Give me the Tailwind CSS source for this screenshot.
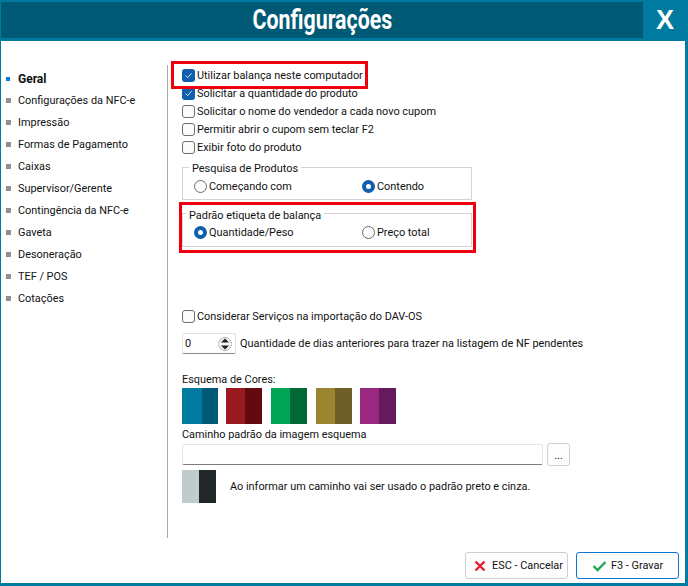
<!DOCTYPE html>
<html lang="pt-BR">
<head>
    <meta charset="UTF-8">
    <title>Configurações</title>
    <script src="https://cdn.jsdelivr.net/npm/@tailwindcss/browser@4"></script>
</head>
<body class="m-0">
<div class="relative w-[688px] h-[586px] overflow-hidden bg-[#007a9e] flex flex-col text-[10.9px] leading-[18px] text-[#111] font-['Roboto',sans-serif]">

    <!-- title bar -->
    <div class="flex h-[36px] mt-[2px] ml-[1px] shrink-0">
        <div class="w-[642px] bg-[#005a75] flex items-center justify-center text-white font-bold text-[27px]">
            <span class="inline-block scale-x-[0.79]">Configurações</span>
        </div>
        <div class="flex-1 flex items-center justify-center text-white font-bold text-[27px] font-['Liberation_Sans',sans-serif] pr-[1px]">X</div>
    </div>

    <!-- body -->
    <div class="flex mt-[3px] ml-[1px] mr-[3px] h-[542px] bg-white">
        <ul class="w-[166px] pt-[26px] shrink-0">
            <li class="flex items-center h-[22px] pt-[1px] pl-[5px] font-bold text-[12px]"><span class="w-[4px] h-[4px] bg-[#0a78d7] mr-[8px]"></span>Geral</li>
            <li class="flex items-center h-[22px] pt-[1px] pl-[5px]"><span class="w-[5px] h-[5px] bg-[#8f8f8f] mr-[7px]"></span>Configurações da NFC-e</li>
            <li class="flex items-center h-[22px] pt-[1px] pl-[5px]"><span class="w-[5px] h-[5px] bg-[#8f8f8f] mr-[7px]"></span>Impressão</li>
            <li class="flex items-center h-[22px] pt-[1px] pl-[5px]"><span class="w-[5px] h-[5px] bg-[#8f8f8f] mr-[7px]"></span>Formas de Pagamento</li>
            <li class="flex items-center h-[22px] pt-[1px] pl-[5px]"><span class="w-[5px] h-[5px] bg-[#8f8f8f] mr-[7px]"></span>Caixas</li>
            <li class="flex items-center h-[22px] pt-[1px] pl-[5px]"><span class="w-[5px] h-[5px] bg-[#8f8f8f] mr-[7px]"></span>Supervisor/Gerente</li>
            <li class="flex items-center h-[22px] pt-[1px] pl-[5px]"><span class="w-[5px] h-[5px] bg-[#8f8f8f] mr-[7px]"></span>Contingência da NFC-e</li>
            <li class="flex items-center h-[22px] pt-[1px] pl-[5px]"><span class="w-[5px] h-[5px] bg-[#8f8f8f] mr-[7px]"></span>Gaveta</li>
            <li class="flex items-center h-[22px] pt-[1px] pl-[5px]"><span class="w-[5px] h-[5px] bg-[#8f8f8f] mr-[7px]"></span>Desoneração</li>
            <li class="flex items-center h-[22px] pt-[1px] pl-[5px]"><span class="w-[5px] h-[5px] bg-[#8f8f8f] mr-[7px]"></span>TEF / POS</li>
            <li class="flex items-center h-[22px] pt-[1px] pl-[5px]"><span class="w-[5px] h-[5px] bg-[#8f8f8f] mr-[7px]"></span>Cotações</li>
        </ul>
        <div class="w-[1px] h-[473px] mt-[24px] bg-[#a9a9a9] shrink-0"></div>

        <div class="flex-1 relative pl-[14px] pt-[25px] flex flex-col">
            <div class="flex items-center h-[18px] gap-[2px]">
                <span class="w-[13px] h-[13px] rounded-[3px] bg-[#0f5fae] flex items-center justify-center"><svg width="9" height="9" viewBox="0 0 9 9" fill="none" stroke="#cfe4f7" stroke-width="1"><path d="M1.5 4.5 L3.7 6.7 L7.5 2.2"/></svg></span>
                <span class="pt-[1px]">Utilizar balança neste computador</span>
            </div>
            <div class="flex items-center h-[18px] gap-[2px]">
                <span class="w-[13px] h-[13px] rounded-[3px] bg-[#0f5fae] flex items-center justify-center"><svg width="9" height="9" viewBox="0 0 9 9" fill="none" stroke="#cfe4f7" stroke-width="1"><path d="M1.5 4.5 L3.7 6.7 L7.5 2.2"/></svg></span>
                <span class="pt-[1px]">Solicitar a quantidade do produto</span>
            </div>
            <div class="flex items-center h-[18px] gap-[2px]">
                <span class="w-[13px] h-[13px] rounded-[3px] border border-[#6e6e6e] bg-[#fbfbfb]"></span>
                <span class="pt-[1px]">Solicitar o nome do vendedor a cada novo cupom</span>
            </div>
            <div class="flex items-center h-[18px] gap-[2px]">
                <span class="w-[13px] h-[13px] rounded-[3px] border border-[#6e6e6e] bg-[#fbfbfb]"></span>
                <span class="pt-[1px]">Permitir abrir o cupom sem teclar F2</span>
            </div>
            <div class="flex items-center h-[18px] gap-[2px]">
                <span class="w-[13px] h-[13px] rounded-[3px] border border-[#6e6e6e] bg-[#fbfbfb]"></span>
                <span class="pt-[1px]">Exibir foto do produto</span>
            </div>

            <!-- Pesquisa de Produtos -->
            <div class="relative mt-[11px] w-[290px] h-[33px] border border-[#d4d4d4]">
                <span class="absolute left-[6px] top-[-9px] px-[3px] pt-[1px] bg-white">Pesquisa de Produtos</span>
                <div class="flex items-center h-full pt-[5px] pl-[11px]">
                    <div class="flex items-center gap-[2px] w-[168px]">
                        <span class="w-[13px] h-[13px] rounded-full border border-[#6e6e6e] bg-[#fbfbfb]"></span>
                        <span class="pt-[1px]">Começando com</span>
                    </div>
                    <div class="flex items-center gap-[2px]">
                        <span class="w-[13px] h-[13px] rounded-full border-[4px] border-[#0f5fae] bg-white"></span>
                        <span class="pt-[1px]">Contendo</span>
                    </div>
                </div>
            </div>

            <!-- Padrao etiqueta -->
            <div class="relative mt-[13px] w-[290px] h-[34px] border border-[#d4d4d4]">
                <span class="absolute left-[3px] top-[-8px] px-[3px] pt-[1px] bg-white">Padrão etiqueta de balança</span>
                <div class="flex items-center h-full pt-[4px] pl-[11px]">
                    <div class="flex items-center gap-[2px] w-[168px]">
                        <span class="w-[13px] h-[13px] rounded-full border-[4px] border-[#0f5fae] bg-white"></span>
                        <span class="pt-[1px]">Quantidade/Peso</span>
                    </div>
                    <div class="flex items-center gap-[2px]">
                        <span class="w-[13px] h-[13px] rounded-full border border-[#6e6e6e] bg-[#fbfbfb]"></span>
                        <span class="pt-[1px]">Preço total</span>
                    </div>
                </div>
            </div>

            <div class="flex items-center h-[18px] gap-[2px] mt-[60px]">
                <span class="w-[13px] h-[13px] rounded-[3px] border border-[#6e6e6e] bg-[#fbfbfb]"></span>
                <span class="pt-[1px]">Considerar Serviços na importação do DAV-OS</span>
            </div>

            <div class="flex items-center h-[21px] mt-[8px] gap-[4px]">
                <div class="w-[54px] h-[21px] border border-[#e2e2e2] border-b-[#8a8a8a] rounded-[2px] flex items-center justify-between pl-[2px] pr-[3px]">
                    <span>0</span>
                    <svg width="14" height="16" viewBox="0 0 14 16"><circle cx="7" cy="8" r="6.5" fill="#f0f0f0" stroke="#999" stroke-width="0.7"/><path d="M0.5 8 H13.5" stroke="#fff" stroke-width="1"/><path d="M3 6.5 L7 2.5 L11 6.5Z M3 9.5 L7 13.5 L11 9.5Z" fill="#222"/></svg>
                </div>
                <span class="pt-[1px]">Quantidade de dias anteriores para trazer na listagem de NF pendentes</span>
            </div>

            <div class="mt-[16px] h-[18px] flex items-center pt-[1px]">Esquema de Cores:</div>
            <div class="flex h-[36px]">
                <div class="w-[36px] flex mr-[8px]"><div class="w-[20px] bg-[#007a9e]"></div><div class="flex-1 bg-[#005a75]"></div></div>
                <div class="w-[36px] flex mr-[9px]"><div class="w-[19px] bg-[#9a1b1f]"></div><div class="flex-1 bg-[#620a0e]"></div></div>
                <div class="w-[36px] flex mr-[9px]"><div class="w-[19px] bg-[#00a556]"></div><div class="flex-1 bg-[#006a37]"></div></div>
                <div class="w-[36px] flex mr-[8px]"><div class="w-[19px] bg-[#9c8530]"></div><div class="flex-1 bg-[#6e5f29]"></div></div>
                <div class="w-[36px] flex"><div class="w-[19px] bg-[#9a2880]"></div><div class="flex-1 bg-[#661a5c]"></div></div>
            </div>

            <div class="mt-[1px] h-[18px] flex items-center pt-[1px]">Caminho padrão da imagem esquema</div>
            <div class="flex items-center h-[23px]">
                <div class="w-[361px] h-[21px] bg-white border border-[#e4e4e4] border-b-[#7f7f7f] rounded-[2px]"></div>
                <div class="w-[23px] h-[23px] ml-[4px] pt-[3px] border border-[#d0d0d0] rounded-[3px] flex items-center justify-center bg-[#fdfdfd]">...</div>
            </div>
            <div class="flex items-center mt-[4px] h-[33px]">
                <div class="w-[34px] h-full flex"><div class="w-[17px] bg-[#c0cccc]"></div><div class="flex-1 bg-[#22282a]"></div></div>
                <span class="ml-[14px] pt-[1px]">Ao informar um caminho vai ser usado o padrão preto e cinza.</span>
            </div>

            <!-- footer -->
            <div class="flex justify-end gap-[8px] mt-auto mb-[4px] pr-[6px]">
                <div class="w-[103px] h-[27px] border border-[#cfcfcf] rounded-[3px] bg-[#fdfdfd] flex items-center pl-[8px] gap-[6px]">
                    <svg width="12" height="12" viewBox="0 0 12 12"><path d="M1.5 1.5 L10.5 10.5 M10.5 1.5 L1.5 10.5" stroke="#ee1c2e" stroke-width="2.4"/></svg>
                    <span>ESC - Cancelar</span>
                </div>
                <div class="w-[103px] h-[27px] border border-[#0a78d7] rounded-[3px] bg-[#fdfdfd] flex items-center pl-[15px] gap-[4px]">
                    <svg width="15" height="12" viewBox="0 0 15 12" fill="none"><path d="M1.5 6 L5.5 10 L13.5 2" stroke="#1fa84f" stroke-width="2.4"/></svg>
                    <span>F3 - Gravar</span>
                </div>
            </div>
        </div>
    </div>

    <!-- red highlights -->
    <div class="absolute left-[171px] top-[61px] w-[197px] h-[28px] border-[3px] border-[#f0000f]"></div>
    <div class="absolute left-[179px] top-[202px] w-[297px] h-[51px] border-[3px] border-[#f0000f]"></div>
</div>
</body>
</html>
